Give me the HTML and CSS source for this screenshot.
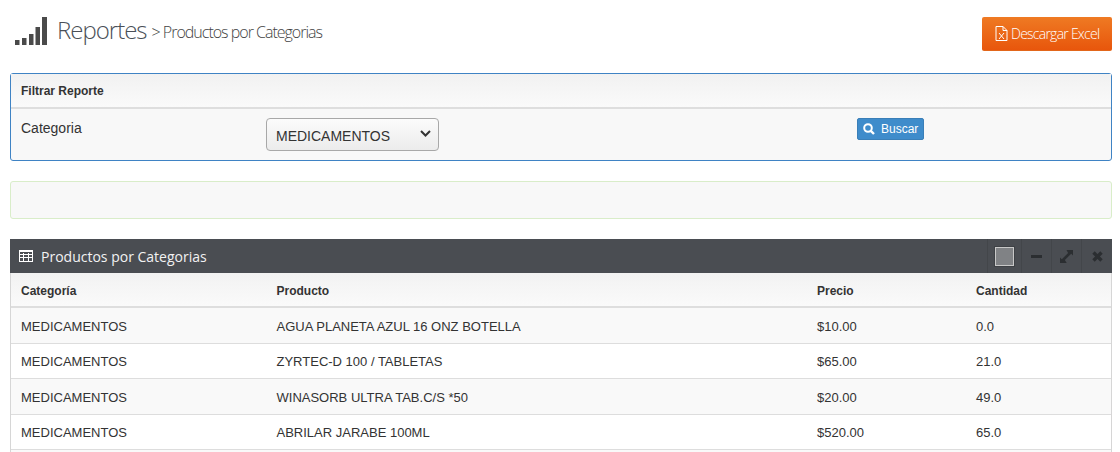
FILE: index.html
```html
<!DOCTYPE html>
<html lang="es">
<head>
<meta charset="utf-8">
<title>Reportes</title>
<link rel="stylesheet" href="styles.css">
</head>
<body>
<header class="page-head">
  <h1 class="page-title">
    <svg class="title-icon" width="32" height="28" viewBox="0 0 32 28"><g fill="#4a4a4a"><rect x="0" y="23" width="4.500" height="5"/><rect x="7" y="21" width="4.500" height="7"/><rect x="14" y="17" width="4.500" height="11"/><rect x="20.500" y="10" width="4.500" height="18"/><rect x="27" y="0" width="5" height="28"/></g></svg>
    <span class="title-text">
      <span class="title-main">Reportes</span>
      <span class="title-sub">&gt; Productos por Categorias</span>
    </span>
  </h1>
  <a class="btn-excel">
    <svg width="13" height="15" viewBox="0 0 13 15" fill="none" stroke="#fff" stroke-width="1"><path d="M1 .5h7l4 4v10H1z"/><path d="M8 .5v4h4"/><path d="M4 7l5 6M9 7l-5 6"/></svg>
    Descargar Excel
  </a>
</header>

<section class="filter">
  <div class="filter-head">Filtrar Reporte</div>
  <div class="filter-body">
    <label class="filter-label">Categoria</label>
    <div class="filter-control">
      <select class="filter-select"><option>MEDICAMENTOS</option></select>
      <svg class="select-arrow" width="11" height="7" viewBox="0 0 11 7" fill="none" stroke="#333" stroke-width="2"><path d="M1 1l4.500 4.500L10 1"/></svg>
    </div>
    <button class="btn-search" type="button">
      <svg width="12" height="12" viewBox="0 0 12 12" fill="none" stroke="#fff"><circle cx="5" cy="5" r="3.800" stroke-width="2"/><path d="M7.800 7.800l3.200 3.200" stroke-width="2.400"/></svg>
      Buscar
    </button>
  </div>
</section>

<div class="notice"></div>

<section class="widget">
  <div class="widget-head">
    <svg class="grid-icon" width="14" height="12" viewBox="0 0 14 12" fill="none" stroke="#fff" shape-rendering="crispEdges"><rect x=".5" y=".5" width="13" height="11"/><path d="M0 1.500h14M.5 4.500h13M.5 7.500h13M4.500 3v8M9.500 3v8"/></svg>
    <span class="widget-title">Productos por Categorias</span>
    <div class="widget-tools">
      <div class="tool tool-first"><span class="swatch"></span></div>
      <div class="tool"><span class="minus"></span></div>
      <div class="tool"><svg width="13" height="13" viewBox="0 0 13 13" fill="#2b2e31"><path d="M13 0v5.500l-1.800-1.800-6.300 6.300 1.800 3H0V7.500l1.800 1.800 6.300-6.300L6.500 0z"/></svg></div>
      <div class="tool tool-last"><svg width="11" height="11" viewBox="0 0 11 11" stroke="#2b2e31" stroke-width="3.400"><path d="M1.500 1.500l8 8M9.500 1.500l-8 8"/></svg></div>
    </div>
  </div>
  <table class="report">
    <colgroup><col class="c1"><col class="c2"><col class="c3"><col class="c4"></colgroup>
    <thead>
      <tr><th>Categoría</th><th>Producto</th><th>Precio</th><th>Cantidad</th></tr>
    </thead>
    <tbody>
      <tr><td>MEDICAMENTOS</td><td>AGUA PLANETA AZUL 16 ONZ BOTELLA</td><td>$10.00</td><td>0.0</td></tr>
      <tr><td>MEDICAMENTOS</td><td>ZYRTEC-D 100 / TABLETAS</td><td>$65.00</td><td>21.0</td></tr>
      <tr><td>MEDICAMENTOS</td><td>WINASORB ULTRA TAB.C/S *50</td><td>$20.00</td><td>49.0</td></tr>
      <tr><td>MEDICAMENTOS</td><td>ABRILAR JARABE 100ML</td><td>$520.00</td><td>65.0</td></tr>
    </tbody>
  </table>
  <div class="table-rest"></div>
</section>
</body>
</html>
```
FILE: styles.css
```css
* { box-sizing: border-box; }
html, body { height: 452px; overflow: hidden; }
body {
  margin: 0;
  padding: 0 8px 0 10px;
  background: #fff;
  color: #333;
  font-family: "Liberation Sans", Arial, sans-serif;
  font-size: 13px;
}
.page-head {
  height: 73px;
  display: flex;
  justify-content: space-between;
  align-items: flex-start;
}
.page-title {
  margin: 17px 0 0;
  display: flex;
  align-items: flex-start;
  font-family: "Open Sans", sans-serif;
  font-weight: 300;
  color: #4a4f57;
}
.title-icon { margin: 0 10px 0 5px; flex: none; }
.title-text { display: flex; align-items: flex-start; height: 28px; line-height: 28px; margin-top: -1px; }
.title-main { font-size: 24px; letter-spacing: -1px; margin-right: 5px; }
.title-sub { font-size: 16px; letter-spacing: -1px; color: #444; margin-top: 2px; }
.btn-excel {
  margin-top: 17px;
  width: 130px;
  height: 34px;
  padding-left: 13px;
  display: flex;
  align-items: center;
  gap: 3px;
  color: #fff;
  font-family: "Open Sans", sans-serif;
  font-size: 14px;
  font-weight: 300;
  letter-spacing: -.75px;
  background: linear-gradient(#ef7a23, #e8560c);
  border-bottom: 1px solid #e2661a;
  border-radius: 2px;
}
.filter {
  height: 88px;
  border: 1px solid #3f83c4;
  border-radius: 3px;
  background: #f8f8f8;
}
.filter-head {
  height: 35px;
  padding: 9px 10px 0;
  font-size: 12px;
  line-height: 16px;
  font-weight: 700;
  background: linear-gradient(#f1f1f1, #fafafa);
  border-bottom: 2px solid #dedede;
}
.filter-body {
  display: grid;
  grid-template-columns: 245px 591px auto;
  padding: 9px 10px 0;
}
.filter-label { font-size: 14px; line-height: 20px; }
.filter-control { position: relative; width: 173px; height: 33px; }
.filter-select {
  display: block;
  width: 173px;
  height: 33px;
  padding: 2px 0 0 9px;
  appearance: none;
  font-family: "Liberation Sans", Arial, sans-serif;
  font-size: 14px;
  color: #333;
  background: linear-gradient(#fbfbfb, #ececec);
  border: 1px solid #a8a8a8;
  border-radius: 4px;
}
.select-arrow { position: absolute; right: 8px; top: 12px; pointer-events: none; }
.btn-search {
  justify-self: start;
  width: 67px;
  height: 22px;
  padding: 0 0 0 5px;
  display: flex;
  align-items: center;
  gap: 6px;
  color: #fff;
  font-family: "Liberation Sans", Arial, sans-serif;
  font-size: 12px;
  background: #3f8ccb;
  border: 1px solid #3a7fb8;
  border-radius: 2px;
}
.notice {
  height: 38px;
  margin-top: 20px;
  background: #f8f8f8;
  border: 1px solid #d9edc9;
  border-radius: 3px;
}
.widget { margin-top: 20px; }
.widget-head {
  height: 34px;
  display: flex;
  align-items: center;
  padding-left: 9px;
  background: #4a4d52;
  color: #fff;
}
.grid-icon { margin-right: 8px; flex: none; }
.widget-title {
  font-family: "Open Sans", sans-serif;
  font-size: 14px;
  color: #f2f2f2;
}
.widget-tools { margin-left: auto; display: flex; height: 100%; }
.tool {
  width: 30px;
  height: 100%;
  display: flex;
  align-items: center;
  justify-content: center;
  border-left: 1px solid #43464a;
}
.tool-first { width: 34px; }
.tool-last { width: 31px; }
.swatch {
  width: 19px;
  height: 19px;
  background: #808285;
  border: 1px solid #c8c8c8;
  outline: 1px solid #3e4145;
}
.minus { width: 11px; height: 3px; background: #2b2e31; }
.report {
  width: 100%;
  table-layout: fixed;
  border-collapse: separate;
  border-spacing: 0;
  border-left: 1px solid #d6d6d6;
  border-right: 1px solid #d6d6d6;
  color: #333;
}
.c1 { width: 255.5px; }
.c2 { width: 540.5px; }
.c3 { width: 159px; }
.report th {
  height: 35px;
  padding: 9px 10px 6px;
  font-size: 12px;
  line-height: 18px;
  text-align: left;
  background: linear-gradient(#f2f2f2, #fafafa);
  border-bottom: 2px solid #dedede;
}
.report td {
  padding: 9.85px 10px 6.15px;
  font-size: 13px;
  line-height: 18.57px;
  border-bottom: 1px solid #ddd;
}
.report tbody tr:nth-child(odd) td { background: #f9f9f9; }
.table-rest {
  height: 1.6px;
  background: #f9f9f9;
  border-left: 1px solid #d6d6d6;
  border-right: 1px solid #d6d6d6;
}
```
